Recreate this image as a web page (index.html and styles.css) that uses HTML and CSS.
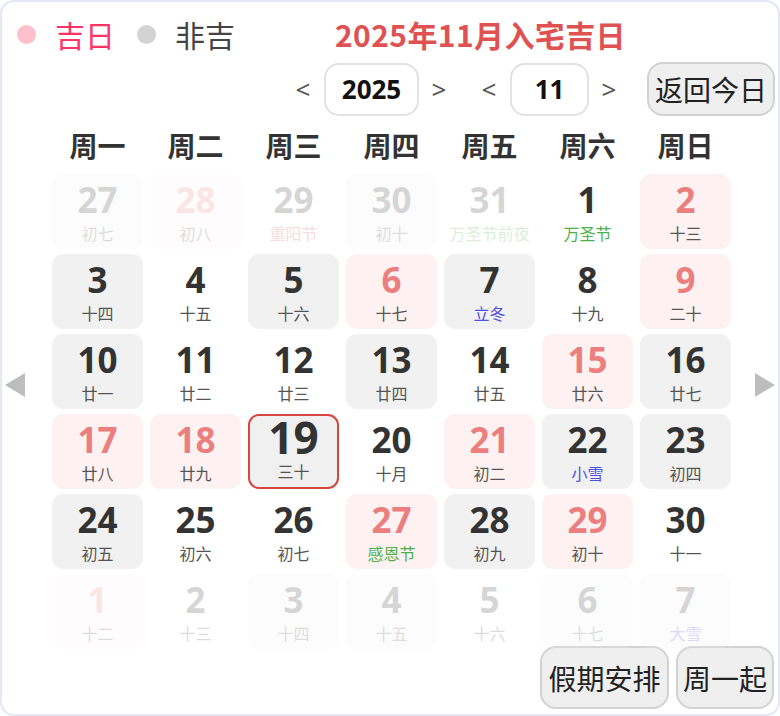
FILE: index.html
```html
<!DOCTYPE html>
<html lang="zh-CN">
<head>
<meta charset="utf-8">
<title>2025年11月入宅吉日</title>
<link rel="stylesheet" href="styles.css">
</head>
<body>
<div class="card">
  <div class="top">
    <span class="dot dot-pink"></span><span class="legend legend-good">吉日</span>
    <span class="dot dot-gray"></span><span class="legend legend-bad">非吉</span>
    <h1 class="title">2025年11月入宅吉日</h1>
  </div>
  <div class="controls">
    <span class="arr">&lt;</span>
    <span class="box box-year">2025</span>
    <span class="arr">&gt;</span>
    <span class="arr arr-gap">&lt;</span>
    <span class="box box-month">11</span>
    <span class="arr">&gt;</span>
    <span class="btn btn-today">返回今日</span>
  </div>
  <div class="main">
    <div class="side"><svg width="20" height="24" viewBox="0 0 20 24"><polygon points="20,0 20,24 0,12" fill="#bdbdbd"/></svg></div>
    <div class="cal">
      <div class="weekdays">
        <span>周一</span><span>周二</span><span>周三</span><span>周四</span><span>周五</span><span>周六</span><span>周日</span>
      </div>
      <div class="grid">
        <div class="cell g faded"><b>27</b><i>初七</i></div>
        <div class="cell p red faded"><b>28</b><i>初八</i></div>
        <div class="cell faded"><b>29</b><i class="lr">重阳节</i></div>
        <div class="cell g faded"><b>30</b><i>初十</i></div>
        <div class="cell faded"><b>31</b><i class="lg">万圣节前夜</i></div>
        <div class="cell"><b>1</b><i class="lg">万圣节</i></div>
        <div class="cell p red"><b>2</b><i>十三</i></div>

        <div class="cell g"><b>3</b><i>十四</i></div>
        <div class="cell"><b>4</b><i>十五</i></div>
        <div class="cell g"><b>5</b><i>十六</i></div>
        <div class="cell p red"><b>6</b><i>十七</i></div>
        <div class="cell g"><b>7</b><i class="lb">立冬</i></div>
        <div class="cell"><b>8</b><i>十九</i></div>
        <div class="cell p red"><b>9</b><i>二十</i></div>

        <div class="cell g"><b>10</b><i>廿一</i></div>
        <div class="cell"><b>11</b><i>廿二</i></div>
        <div class="cell"><b>12</b><i>廿三</i></div>
        <div class="cell g"><b>13</b><i>廿四</i></div>
        <div class="cell"><b>14</b><i>廿五</i></div>
        <div class="cell p red"><b>15</b><i>廿六</i></div>
        <div class="cell g"><b>16</b><i>廿七</i></div>

        <div class="cell p red"><b>17</b><i>廿八</i></div>
        <div class="cell p red"><b>18</b><i>廿九</i></div>
        <div class="cell today"><b>19</b><i>三十</i></div>
        <div class="cell"><b>20</b><i>十月</i></div>
        <div class="cell p red"><b>21</b><i>初二</i></div>
        <div class="cell g"><b>22</b><i class="lb">小雪</i></div>
        <div class="cell g"><b>23</b><i>初四</i></div>

        <div class="cell g"><b>24</b><i>初五</i></div>
        <div class="cell"><b>25</b><i>初六</i></div>
        <div class="cell"><b>26</b><i>初七</i></div>
        <div class="cell p red"><b>27</b><i class="lg">感恩节</i></div>
        <div class="cell g"><b>28</b><i>初九</i></div>
        <div class="cell p red"><b>29</b><i>初十</i></div>
        <div class="cell"><b>30</b><i>十一</i></div>

        <div class="cell p red faded"><b>1</b><i>十二</i></div>
        <div class="cell faded"><b>2</b><i>十三</i></div>
        <div class="cell g faded"><b>3</b><i>十四</i></div>
        <div class="cell g faded"><b>4</b><i>十五</i></div>
        <div class="cell faded"><b>5</b><i>十六</i></div>
        <div class="cell g faded"><b>6</b><i>十七</i></div>
        <div class="cell g faded"><b>7</b><i class="lb">大雪</i></div>
      </div>
    </div>
    <div class="side side-right"><svg width="20" height="24" viewBox="0 0 20 24"><polygon points="0,0 0,24 20,12" fill="#bdbdbd"/></svg></div>
  </div>
  <div class="bottom">
    <span class="btn btn-holiday">假期安排</span>
    <span class="btn btn-week">周一起</span>
  </div>
</div>
</body>
</html>
```

FILE: styles.css
```css
html, body {
  margin: 0;
  padding: 0;
  background: #ffffff;
}
body {
  font-family: "Noto Sans CJK SC", "Noto Sans", sans-serif;
  color: #333;
}
.card {
  width: 780px;
  height: 716px;
  box-sizing: border-box;
  border: 2px solid #e4e7f4;
  border-radius: 14px;
  background: #fff;
  overflow: hidden;
}
.top {
  display: flex;
  align-items: center;
  height: 40px;
  margin-top: 12px;
  padding-left: 15px;
}
.dot {
  width: 19px;
  height: 19px;
  border-radius: 50%;
  flex: none;
}
.dot-pink { background: #ffc0cb; }
.dot-gray { background: #d3d3d3; margin-left: 22px; }
.legend {
  font-size: 30px;
  line-height: 40px;
  margin-left: 19px;
}
.legend-good { color: #ff3366; }
.legend-bad { color: #444; }
.title {
  margin: 0 0 0 100px;
  font-size: 30px;
  font-weight: bold;
  color: #e05252;
  line-height: 40px;
  letter-spacing: 0.4px;
}
.controls {
  display: flex;
  align-items: center;
  justify-content: flex-end;
  height: 54px;
  margin-top: 8px;
  padding-right: 3px;
}
.arr {
  width: 40px;
  text-align: center;
  font-family: "Noto Sans", sans-serif;
  font-size: 26px;
  color: #555;
}
.arr-gap { margin-left: 10px; }
.box {
  box-sizing: border-box;
  height: 53px;
  border: 2px solid #e2e2e2;
  border-radius: 15px;
  display: flex;
  align-items: center;
  justify-content: center;
  font-family: "Open Sans", sans-serif;
  font-weight: bold;
  font-size: 26px;
  color: #111;
}
.box-year { width: 95px; margin-left: 1px; }
.box-month { width: 79px; margin-left: 1px; }
.btn {
  box-sizing: border-box;
  display: flex;
  align-items: center;
  justify-content: center;
  background: #efefef;
  border: 2px solid #d2d2d2;
  border-radius: 16px;
  font-size: 28px;
  color: #222;
}
.btn-today {
  width: 128px;
  height: 54px;
  margin-left: 18px;
}
.main {
  display: flex;
  margin-top: 12px;
}
.side {
  width: 50px;
  display: flex;
  align-items: center;
  justify-content: flex-start;
  padding-left: 3px;
  box-sizing: border-box;
  padding-bottom: 8px;
}
.side-right {
  width: 47px;
  padding-left: 24px;
}
.cal {
  width: 679px;
}
.weekdays {
  display: grid;
  grid-template-columns: repeat(7, 91px);
  column-gap: 7px;
  height: 35px;
  align-items: center;
  font-size: 28px;
  font-weight: bold;
  color: #333;
  text-align: center;
  line-height: 33px;
}
.grid {
  margin-top: 11px;
  display: grid;
  grid-template-columns: repeat(7, 91px);
  grid-auto-rows: 75px;
  column-gap: 7px;
  row-gap: 5px;
}
.cell {
  box-sizing: border-box;
  border-radius: 11px;
  display: flex;
  flex-direction: column;
  align-items: center;
  padding-top: 8px;
}
.cell b {
  font-family: "Open Sans", sans-serif;
  font-weight: bold;
  font-size: 35px;
  line-height: 35px;
  color: #333;
}
.cell i {
  font-style: normal;
  font-size: 16px;
  line-height: 20px;
  margin-top: 6px;
  color: #555;
  white-space: nowrap;
}
.cell.g { background: #f1f1f1; }
.cell.p { background: #fdf2f1; }
.cell.red b { color: #eb7e7e; }
.cell .lg { color: #4cb04c; }
.cell .lb { color: #5050e0; }
.cell .lr { color: #e05050; }
.cell.faded { opacity: 0.2; }
.cell.today {
  background: #f0f0f0;
  border: 2px solid #d6463f;
  padding-top: 1px;
}
.cell.today b {
  font-size: 44px;
  line-height: 40px;
}
.cell.today i {
  margin-top: 4px;
}
.bottom {
  display: flex;
  justify-content: flex-end;
  gap: 7px;
  margin-top: -3px;
  padding-right: 4px;
}
.btn-holiday { width: 129px; height: 63px; }
.btn-week { width: 98px; height: 63px; }
```
